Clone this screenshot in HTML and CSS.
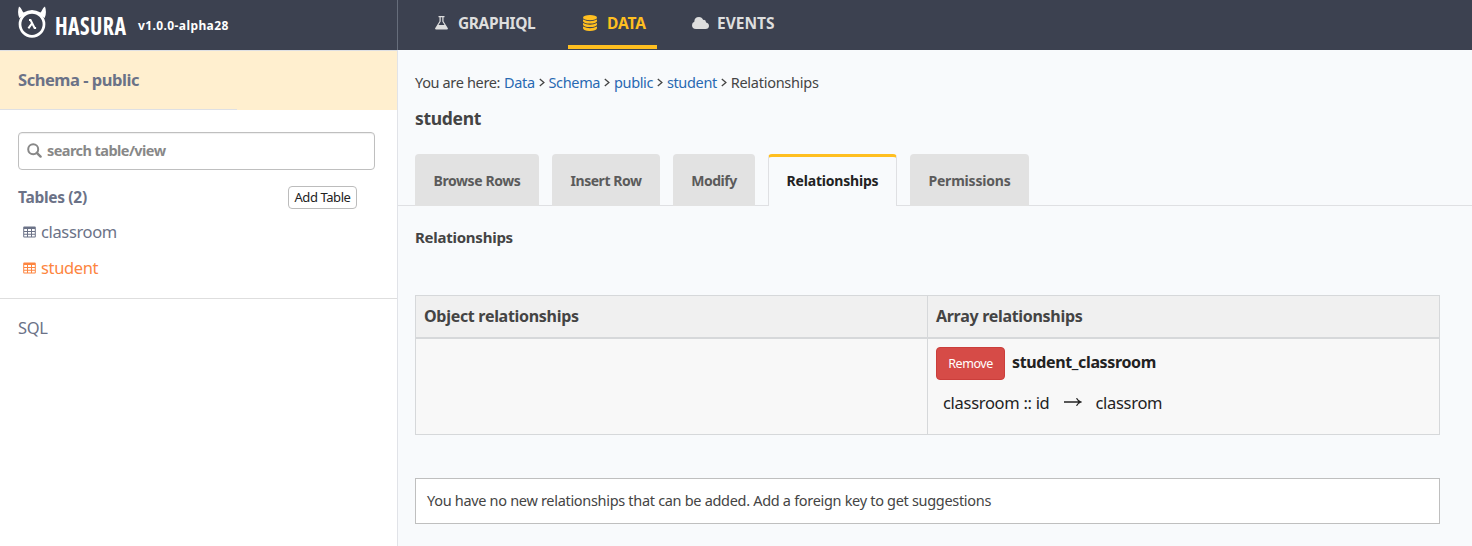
FILE: index.html
```html
<!DOCTYPE html>
<html lang="en">
<head>
<meta charset="utf-8">
<title>Hasura Console</title>
<link rel="stylesheet" href="styles.css">
</head>
<body>
<svg class="defs" width="0" height="0">
  <symbol id="table" viewBox="0 0 13 12">
    <path fill="currentColor" fill-rule="evenodd" d="M1.2 0.5h10.6q1 0 1 1v9q0 1-1 1h-10.6q-1 0-1-1v-9q0-1 1-1zM1.2 3v2h2.8v-2zM5 3v2h3v-2zM9 3v2h2.8v-2zM1.2 6v1.8h2.8v-1.8zM5 6v1.8h3v-1.8zM9 6v1.8h2.8v-1.8zM1.2 8.8v1.7h2.8v-1.7zM5 8.8v1.7h3v-1.7zM9 8.8v1.7h2.8v-1.7z"/>
  </symbol>
  <symbol id="chevron" viewBox="0 0 6 9">
    <path fill="none" stroke="#444" stroke-width="1.300" d="M.8 1L4.900 4.500.8 8"/>
  </symbol>
</svg>
<header class="topbar">
  <div class="brand">
    <svg class="logo" width="28" height="33" viewBox="0 0 28 33">
      <path fill="#fff" d="M1 .5C3.500 2 4 5 5.500 6.500Q14 1.500 22.500 6.500C24 5 24.500 2 27 .5Q29 6.500 26.700 12L22 9Q14 3 6 9L1.300 12Q-1 6.500 1 .5z"/>
      <circle cx="14" cy="18.300" r="12" fill="none" stroke="#fff" stroke-width="2.700"/>
      <path fill="none" stroke="#fff" stroke-width="2" d="M11 14h1.500l4.100 8h1.500M14 17.300l-3.600 5"/>
    </svg>
    <span class="wordmark">HASURA</span>
    <span class="version">v1.0.0-alpha28</span>
  </div>
  <nav class="nav">
    <a class="nav-item graphiql">
      <svg width="13" height="14" viewBox="0 0 13 14"><path fill="currentColor" fill-rule="evenodd" d="M3.500 0h6v1.200h-1v4l4.200 6.800q.8 1.500-.9 1.500h-10.600q-1.700 0-.9-1.500l4.200-6.800v-4h-1zM5.700 1.200v4.300l-2.200 3.500h6l-2.200-3.500v-4.300z"/></svg>
      <span>GRAPHIQL</span>
    </a>
    <a class="nav-item data active">
      <svg width="14" height="16" viewBox="0 0 14 16"><ellipse cx="7" cy="2.700" rx="7" ry="2.600" fill="currentColor"/><path fill="currentColor" d="M0 4.500Q7 8 14 4.500v1.700Q13 8.500 7 8.600T0 6.200zM0 8Q7 11.500 14 8v1.700Q13 12 7 12.100T0 9.700zM0 11.500Q7 15 14 11.500v1.700Q13 15.900 7 16T0 13.200z"/></svg>
      <span>DATA</span>
    </a>
    <a class="nav-item events">
      <svg width="17" height="12" viewBox="0 0 17 12"><path fill="currentColor" d="M4 12Q0 11.700 0 8.200 0 5.800 2.300 4.800 2.300 0 7 0q3 0 4.200 2.900 2.600-.6 2.900 2.500Q17 6 17 8.900 16.800 11.800 13.500 12z"/></svg>
      <span>EVENTS</span>
    </a>
  </nav>
</header>
<div class="columns">
  <aside class="sidebar">
    <div class="schema">Schema - public</div>
    <div class="schema-line"></div>
    <div class="search">
      <svg width="15" height="15" viewBox="0 0 15 15"><circle cx="6.200" cy="6.200" r="5" fill="none" stroke="currentColor" stroke-width="2"/><path d="M9.800 9.800l3.800 3.800" stroke="currentColor" stroke-width="2.400" stroke-linecap="round"/></svg>
      <span>search table/view</span>
    </div>
    <div class="tables-head">
      <span class="tables-title">Tables (2)</span>
      <button class="add">Add Table</button>
    </div>
    <ul class="tables">
      <li><svg width="13" height="12"><use href="#table"/></svg><span>classroom</span></li>
      <li class="current"><svg width="13" height="12"><use href="#table"/></svg><span>student</span></li>
    </ul>
    <div class="sql">SQL</div>
  </aside>
  <main class="content">
    <div class="crumbs"><span class="lead">You are here:</span><a>Data</a><svg width="6" height="9"><use href="#chevron"/></svg><a>Schema</a><svg width="6" height="9"><use href="#chevron"/></svg><a>public</a><svg width="6" height="9"><use href="#chevron"/></svg><a>student</a><svg width="6" height="9"><use href="#chevron"/></svg><span class="here">Relationships</span></div>
    <h1 class="title">student</h1>
    <div class="tabs">
      <a class="tab browse">Browse Rows</a>
      <a class="tab insert">Insert Row</a>
      <a class="tab modify">Modify</a>
      <a class="tab rel selected">Relationships</a>
      <a class="tab perm">Permissions</a>
    </div>
    <h2 class="section">Relationships</h2>
    <div class="grid">
      <div class="th">Object relationships</div>
      <div class="th">Array relationships</div>
      <div class="td"></div>
      <div class="td">
        <div class="rel-head"><button class="remove">Remove</button><strong>student_classroom</strong></div>
        <div class="rel-def"><span>classroom :: id</span><svg width="18" height="10" viewBox="0 0 18 10"><path d="M0 5h16.500M12.500 1.200Q14 4 17 5 14 6 12.500 8.800" fill="none" stroke="currentColor" stroke-width="1.300"/></svg><span>classrom</span></div>
      </div>
    </div>
    <div class="notice">You have no new relationships that can be added. Add a foreign key to get suggestions</div>
  </main>
</div>
</body>
</html>
```
FILE: styles.css
```css
* { box-sizing: border-box; }
body { margin: 0; height: 546px; overflow: hidden; background: #f8fafc; color: #444; font-family: "Noto Sans", "Open Sans", sans-serif; font-size: 14.5px; letter-spacing: -.3px; white-space: nowrap; }
.defs { position: absolute; }
svg { flex: none; display: block; }
button { font-family: inherit; font-size: 13px; padding: 0; letter-spacing: -.42px; }

.topbar { display: flex; height: 50px; background: #3c4150; }
.brand { display: flex; width: 398px; padding-left: 18px; border-right: 1px solid #666d7b; color: #fff; }
.logo { margin-top: 6px; }
.wordmark { width: 83px; margin-left: 9px; font-family: "Open Sans", sans-serif; font-size: 25px; font-weight: 700; font-stretch: 75%; line-height: 51px; letter-spacing: .5px; transform: scaleX(.875); transform-origin: 0 0; }
.version { font-size: 12px; font-weight: 700; line-height: 51px; letter-spacing: .4px; }
.nav { display: flex; }
.nav-item { display: flex; align-items: center; height: 49px; padding-bottom: 3px; color: #dedede; font-size: 15.5px; font-weight: 700; letter-spacing: 0; }
.graphiql { margin-left: 37px; gap: 10px; width: 133px; letter-spacing: -.4px; }
.data { width: 89px; padding: 0 0 0 15px; gap: 10px; letter-spacing: -.1px; border-bottom: 4px solid #ffbf20; }
.events { margin-left: 35px; gap: 8px; }
.active { color: #ffbf20; }

.columns { display: flex; height: 496px; }
.sidebar { width: 398px; background: #fff; border-right: 1px solid #e1e3e8; color: #6b7287; }
.schema { height: 59px; padding-left: 18px; border-top: 1px solid #dedfe3; background: #ffefcf; font-size: 16.5px; font-weight: 700; letter-spacing: -.46px; line-height: 58px; }
.schema-line { height: 1px; background: linear-gradient(90deg, #dee0e4 237px, #ffefcf 237px); }
.search { display: flex; align-items: center; gap: 5px; width: 357px; height: 38px; margin: 22px 0 0 18px; padding: 0 0 1px 8px; border: 1px solid #bfbfbf; border-radius: 4px; box-shadow: inset 0 1px 1px #0001; color: #888; font-weight: 700; letter-spacing: -.56px; }
.search span { margin-top: -2px; }
.tables-head { display: flex; align-items: center; justify-content: space-between; height: 23px; margin: 16px 40px 0 18px; font-size: 15.5px; font-weight: 700; }
.tables-title { margin-top: -2px; }
.add { width: 69px; height: 23px; padding-bottom: 1px; border: 1px solid #bcbcbc; border-radius: 4px; background: #fff; color: #222; }
.tables { margin: 4px 0 0; padding: 0 0 0 23px; list-style: none; font-size: 16.5px; letter-spacing: -.36px; }
.tables li { display: flex; align-items: center; gap: 5px; height: 36px; }
.tables svg { margin-top: 2px; }
.tables .current { color: #fd8540; }
.sql { height: 59px; margin-top: 13px; padding-left: 18px; border-top: 1px solid #dedede; font-size: 16.5px; line-height: 58px; }

.content { flex: 1; padding-top: 21px; }
.crumbs { display: flex; align-items: center; height: 22px; padding-left: 17px; letter-spacing: -.35px; }
.crumbs .lead { width: 89px; }
.crumbs .here { letter-spacing: -.26px; }
.crumbs a { color: #2869b2; }
.crumbs svg { margin: 1px 3.8px 0 4px; }
.title { margin: 12px 0 0 17px; font-size: 17.5px; font-weight: 700; line-height: 26px; }
.tabs { display: flex; gap: 13px; height: 52px; margin-top: 23px; padding-left: 17px; background: linear-gradient(#dfe0e3, #dfe0e3) 0 51px / 100% 1px no-repeat; }
.tab { height: 52px; border-radius: 4px 4px 0 0; background: #e2e2e2; color: #5b5b5b; font-size: 14px; font-weight: 700; line-height: 53px; text-align: center; }
.browse { width: 124px; letter-spacing: -.4px; }
.insert { width: 108px; letter-spacing: -.46px; }
.modify { width: 82px; letter-spacing: -.45px; }
.rel { width: 129px; letter-spacing: -.2px; }
.perm { width: 119px; letter-spacing: -.2px; }
.selected { border: 1px solid #dfe0e3; border-top: 3px solid #ffbf20; border-bottom: 0; background: #f8fafc; color: #222; line-height: 47px; }
.section { margin: 19px 0 0 17px; font-size: 15px; font-weight: 700; letter-spacing: -.25px; line-height: 24px; }
.grid { display: grid; grid-template: 43px 96px / 512px 512px; width: 1025px; height: 140px; margin: 46px 0 0 17px; border: 1px solid #d6d8da; border-width: 1px 1px 0 0; }
.th, .td { border: solid #d6d8da; border-width: 0 0 1px 1px; }
.th { padding-left: 8px; border-bottom-width: 2px; background: #f0f0f0; font-size: 16px; font-weight: 700; line-height: 40px; }
.td { padding: 8px; background: #f8f8f8; color: #222; }
.rel-head { display: flex; gap: 7px; height: 33px; font-size: 16px; letter-spacing: -.36px; line-height: 30px; }
.remove { width: 69px; height: 33px; border: 1px solid #cb3e3b; border-radius: 4px; background: #d64b47; color: #fff; font-size: 12.5px; }
.rel-def { display: flex; align-items: center; height: 30px; margin-top: 7px; padding-left: 7px; font-size: 16.5px; }
.rel-def svg { margin: 0 13px 0 15px; }
.notice { width: 1025px; height: 46px; margin: 43px 0 0 17px; padding-left: 11px; border: 1px solid #bfbfbf; background: #fff; letter-spacing: -.31px; line-height: 43px; }
```
